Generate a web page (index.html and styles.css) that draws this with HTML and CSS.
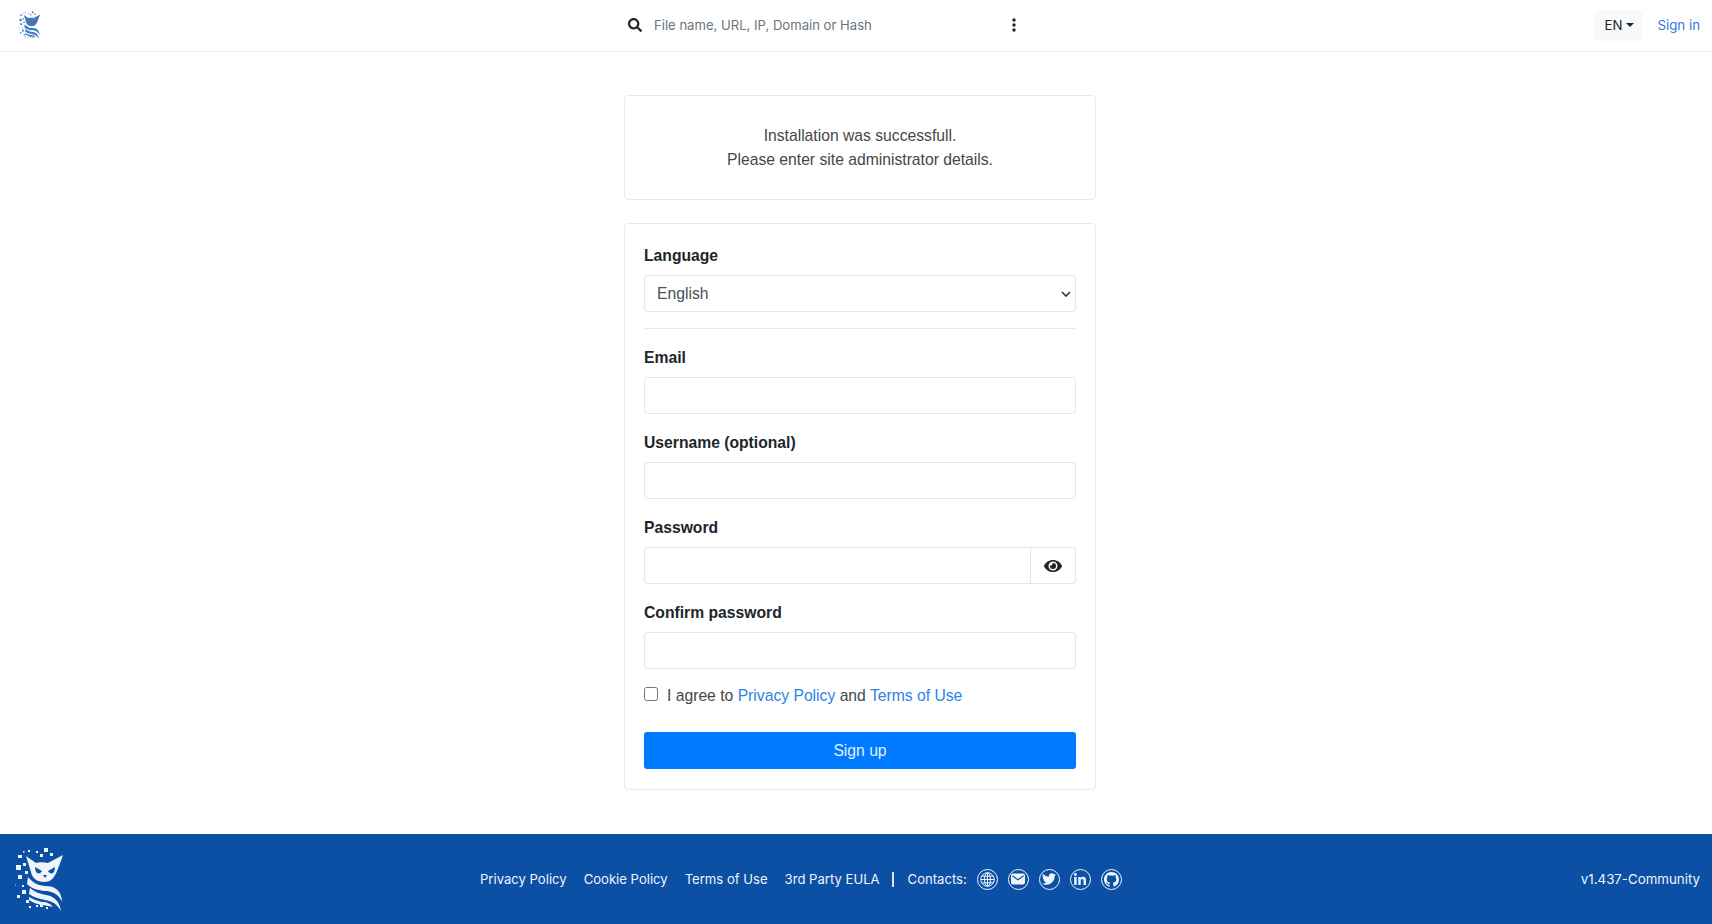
FILE: index.html
```html
<!DOCTYPE html>
<html lang="en">
<head>
    <meta charset="UTF-8">
    <meta name="viewport" content="width=device-width, initial-scale=1.0">
    <title>Sign up</title>
    <link rel="stylesheet" href="styles.css">
</head>
<body>
    <svg class="defs" width="0" height="0" aria-hidden="true">
        <symbol id="owl" viewBox="0 0 50 64">
            <g fill="currentColor">
                <rect x="29" y="1" width="4" height="4"/><rect x="21" y="4" width="2" height="2"/><rect x="13" y="3" width="2" height="2"/><rect x="8" y="4" width="1.5" height="1.5"/>
                <rect x="25" y="7" width="3" height="3"/><rect x="35" y="6" width="3" height="3"/><rect x="3" y="8" width="4" height="3"/><rect x="12" y="11" width="2" height="2"/>
                <rect x="1" y="18" width="5" height="5"/><rect x="8" y="16" width="3" height="3"/><rect x="3" y="28" width="4" height="4"/><rect x="10" y="24" width="3" height="3"/>
                <rect x="-1" y="37" width="1.5" height="1.5"/><rect x="7" y="38" width="2" height="2"/><rect x="7" y="43" width="4" height="4"/><rect x="2" y="48" width="3" height="3"/>
                <rect x="11" y="53" width="3" height="3"/><rect x="14" y="59" width="2" height="2"/><rect x="21" y="58" width="2" height="2"/><rect x="25" y="57" width="3" height="3"/><rect x="31" y="60" width="2" height="2"/>
                <path d="M11 9l10 7c3-1 8-1 12 0l15-8c-2 6-4 11-6 16-3 8-7 11-13 11-7 0-12-4-13-10z"/>
                <path d="M13 30c4 5 10 9 18 9 7 0 13 3 15 10 1 3 1 6 1 6-3-7-8-10-15-11-7 0-15-2-20-7z"/>
                <path d="M15 41c5 4 10 6 16 7 7 1 12 5 14 12l1 4c-4-7-9-10-16-11-6-1-12-3-16-6z"/>
                <path d="M14 50c4 2 8 4 13 5 5 0 9 2 11 5-4-1-8-2-12-2-4-1-9-3-12-5z"/>
            </g>
            <path class="owl-eyes" d="M20 20l7 4c-1 2-3 3-5 2-1-1-2-3-2-6zm20 0l-7 4c1 2 3 3 5 2 1-1 2-3 2-6zM28 28l2 3 2-3z"/>
        </symbol>
    </svg>

    <header class="topbar">
        <a class="brand" href="#"><svg class="brand-logo"><use href="#owl"/></svg></a>
        <form class="search">
            <svg class="search-icon" viewBox="0 0 512 512"><path d="M505 442.7L405.3 343c-4.5-4.5-10.6-7-17-7H372c27.6-35.3 44-79.7 44-128C416 93.1 322.9 0 208 0S0 93.1 0 208s93.1 208 208 208c48.3 0 92.7-16.4 128-44v16.3c0 6.4 2.5 12.5 7 17l99.7 99.7c9.4 9.4 24.6 9.4 33.9 0l28.3-28.3c9.4-9.4 9.4-24.6.1-34zM208 336c-70.7 0-128-57.2-128-128 0-70.7 57.2-128 128-128 70.7 0 128 57.2 128 128 0 70.7-57.2 128-128 128z"/></svg>
            <input class="search-input" type="text" placeholder="File name, URL, IP, Domain or Hash">
            <svg class="search-more" viewBox="0 0 4 14"><circle cx="2" cy="2" r="1.7"/><circle cx="2" cy="7" r="1.7"/><circle cx="2" cy="12" r="1.7"/></svg>
        </form>
        <div class="topbar-right">
            <button class="lang-btn" type="button">EN<span class="caret"></span></button>
            <a class="signin" href="#">Sign in</a>
        </div>
    </header>

    <main>
        <div class="card notice">
            <p>Installation was successfull.</p>
            <p>Please enter site administrator details.</p>
        </div>
        <form class="card signup">
            <div class="field first">
                <label for="language">Language</label>
                <div class="select-wrap">
                    <select id="language" class="control"><option>English</option></select>
                    <svg class="select-arrow" viewBox="0 0 10 6"><path d="M1 1l4 4 4-4"/></svg>
                </div>
            </div>
            <hr>
            <div class="field">
                <label for="email">Email</label>
                <input id="email" class="control" type="email">
            </div>
            <div class="field">
                <label for="username">Username (optional)</label>
                <input id="username" class="control" type="text">
            </div>
            <div class="field">
                <label for="password">Password</label>
                <div class="input-group">
                    <input id="password" class="control" type="password">
                    <button class="eye-btn" type="button">
                        <svg viewBox="0 0 576 512"><path d="M572.52 241.4C518.29 135.59 410.93 64 288 64S57.68 135.64 3.48 241.41a32.35 32.35 0 0 0 0 29.19C57.71 376.41 165.07 448 288 448s230.32-71.64 284.52-177.41a32.35 32.35 0 0 0 0-29.19zM288 400a144 144 0 1 1 144-144 143.93 143.93 0 0 1-144 144zm0-240a95.31 95.31 0 0 0-25.31 3.79 47.85 47.85 0 0 1-66.9 66.9A95.78 95.78 0 1 0 288 160z"/></svg>
                    </button>
                </div>
            </div>
            <div class="field">
                <label for="confirm">Confirm password</label>
                <input id="confirm" class="control" type="password">
            </div>
            <div class="agree">
                <input id="agree" type="checkbox">
                <label for="agree">I agree to <a href="#">Privacy Policy</a> and <a href="#">Terms of Use</a></label>
            </div>
            <button class="submit" type="submit">Sign up</button>
        </form>
    </main>

    <footer class="footer">
        <a class="footer-brand" href="#"><svg class="footer-logo"><use href="#owl"/></svg></a>
        <nav class="footer-links">
            <a href="#">Privacy Policy</a>
            <a href="#">Cookie Policy</a>
            <a href="#">Terms of Use</a>
            <a href="#">3rd Party EULA</a>
            <span class="divider"></span>
            <span class="contacts">Contacts:</span>
            <a class="social" href="#">
                <svg class="ic-globe" viewBox="0 0 12 12"><g class="line"><circle cx="6" cy="6" r="5.4"/><ellipse cx="6" cy="6" rx="2.4" ry="5.4"/><path d="M.6 6h10.8M1.4 3.3h9.2M1.4 8.7h9.2M6 .6v10.8"/></g></svg>
            </a>
            <a class="social" href="#">
                <svg class="ic-mail" viewBox="0 0 14 12"><rect class="solid" x="0" y="0.5" width="14" height="11" rx="2"/><path class="cut" d="M1.4 2.8l5.6 4 5.6-4"/></svg>
            </a>
            <a class="social" href="#">
                <svg class="ic-bird" viewBox="0 0 512 512"><path class="solid" d="M459.37 151.716c.325 4.548.325 9.097.325 13.645 0 138.72-105.583 298.558-298.558 298.558-59.452 0-114.68-17.219-161.137-47.106 8.447.974 16.568 1.299 25.34 1.299 49.055 0 94.213-16.568 130.274-44.832-46.132-.975-84.792-31.188-98.112-72.772 6.498.974 12.995 1.624 19.818 1.624 9.421 0 18.843-1.3 27.614-3.573-48.081-9.747-84.143-51.98-84.143-102.985v-1.299c13.969 7.797 30.214 12.67 47.431 13.319-28.264-18.843-46.781-51.005-46.781-87.391 0-19.492 5.197-37.36 14.294-52.954 51.655 63.675 129.3 105.258 216.365 109.807-1.624-7.797-2.599-15.918-2.599-24.04 0-57.828 46.782-104.934 104.934-104.934 30.213 0 57.502 12.67 76.67 33.137 23.715-4.548 46.456-13.32 66.599-25.34-7.798 24.366-24.366 44.833-46.132 57.827 21.117-2.273 41.584-8.122 60.426-16.243-14.292 20.791-32.161 39.308-52.628 54.253z"/></svg>
            </a>
            <a class="social" href="#">
                <svg class="ic-in" viewBox="0 0 448 448"><path class="solid" d="M100.28 448H7.4V148.9h92.88zM53.79 108.1C24.09 108.1 0 83.5 0 53.8a53.79 53.79 0 0 1 107.58 0c0 29.7-24.1 54.3-53.79 54.3zM447.9 448h-92.68V302.4c0-34.7-.7-79.2-48.29-79.2-48.29 0-55.69 37.7-55.69 76.7V448h-92.78V148.9h89.08v40.8h1.3c12.4-23.5 42.69-48.3 87.88-48.3 94 0 111.28 61.9 111.28 142.3V448z"/></svg>
            </a>
            <a class="social" href="#">
                <svg class="ic-gh" viewBox="0 0 16 16"><path class="solid" d="M8 0C3.58 0 0 3.58 0 8c0 3.54 2.29 6.53 5.47 7.59.4.07.55-.17.55-.38 0-.19-.01-.82-.01-1.49-2.01.37-2.53-.49-2.69-.94-.09-.23-.48-.94-.82-1.13-.28-.15-.68-.52-.01-.53.63-.01 1.08.58 1.23.82.72 1.21 1.87.87 2.33.66.07-.52.28-.87.51-1.07-1.78-.2-3.64-.89-3.64-3.95 0-.87.31-1.59.82-2.15-.08-.2-.36-1.02.08-2.12 0 0 .67-.21 2.2.82.64-.18 1.32-.27 2-.27.68 0 1.36.09 2 .27 1.53-1.04 2.2-.82 2.2-.82.44 1.1.16 1.92.08 2.12.51.56.82 1.27.82 2.15 0 3.07-1.87 3.75-3.65 3.95.29.25.54.73.54 1.48 0 1.07-.01 1.93-.01 2.2 0 .21.15.46.55.38A8.013 8.013 0 0016 8c0-4.42-3.58-8-8-8z"/></svg>
            </a>
        </nav>
        <span class="version">v1.437-Community</span>
    </footer>
</body>
</html>
```

FILE: styles.css
```css
* {
    margin: 0;
    padding: 0;
    box-sizing: border-box;
}

html {
    overflow: hidden;
}

body {
    height: 924px;
    display: flex;
    flex-direction: column;
    background: #fff;
    color: #212529;
    font-family: "Liberation Sans", Arial, sans-serif;
    font-size: 15.7px;
    line-height: 24px;
}

a {
    text-decoration: none;
}

.defs {
    position: absolute;
}

/* top bar */
.topbar {
    display: flex;
    align-items: center;
    height: 52px;
    padding: 0 12px 1px 18px;
    border-bottom: 1px solid #f1f1f1;
    font-family: Inter, "Noto Sans", sans-serif;
    font-size: 13.3px;
}

.brand {
    display: flex;
    width: 24px;
    color: #3a7cc2;
    --owl-eyes: #b5475a;
}

.brand-logo {
    width: 24px;
    height: 28px;
}

.search {
    display: flex;
    align-items: center;
    width: 393px;
    margin-left: 586px;
}

.search-icon {
    width: 14px;
    height: 14px;
    fill: #212529;
}

.search-input {
    flex: 1;
    margin-left: 12px;
    border: none;
    outline: none;
    background: transparent;
    font-family: inherit;
    font-size: 13.1px;
}

.search-input::placeholder {
    color: #6c757d;
    opacity: 1;
}

.search-more {
    width: 4px;
    height: 14px;
    margin-right: 5px;
    fill: #212529;
}

.topbar-right {
    display: flex;
    align-items: center;
    margin-left: auto;
}

.lang-btn {
    display: flex;
    align-items: center;
    height: 31px;
    padding: 0 9px;
    border: none;
    border-radius: 4px;
    background: #f8f9fa;
    color: #212529;
    font-family: inherit;
    font-size: 13.3px;
}

.caret {
    margin-left: 4px;
    border-top: 4px solid #212529;
    border-left: 4px solid transparent;
    border-right: 4px solid transparent;
}

.signin {
    margin-left: 14px;
    color: #2d7be0;
}

/* cards */
main {
    flex: 1;
    display: flex;
    flex-direction: column;
    align-items: center;
    padding: 43px 0 0 8px;
}

.card {
    width: 472px;
    border: 1px solid #e6e8ea;
    border-radius: 4px;
    background: #fff;
}

.notice {
    height: 105px;
    padding-top: 28px;
    text-align: center;
    color: #43474b;
    line-height: 23.5px;
}

.signup {
    height: 567px;
    margin-top: 23px;
    padding: 20px 19px;
}

.field {
    margin-top: 17px;
}

.field.first {
    margin-top: 0;
}

.field label {
    display: block;
    margin-bottom: 7px;
    font-weight: 700;
}

.control {
    display: block;
    width: 100%;
    height: 37px;
    padding: 6px 12px;
    border: 1px solid #e3e5e8;
    border-radius: 4px;
    outline: none;
    background: #fff;
    color: #495057;
    font-family: inherit;
    font-size: 15.7px;
}

.select-wrap {
    position: relative;
}

select.control {
    appearance: none;
}

.select-arrow {
    position: absolute;
    top: 16px;
    right: 5px;
    width: 10px;
    height: 6px;
    fill: none;
    stroke: #343a40;
    stroke-width: 1.7;
}

hr {
    margin-top: 16px;
    border: none;
    border-top: 1px solid #e8eaec;
}

.input-group {
    display: flex;
}

.input-group .control {
    flex: 1;
    border-radius: 4px 0 0 4px;
}

.eye-btn {
    display: flex;
    align-items: center;
    justify-content: center;
    width: 45px;
    border: 1px solid #e3e5e8;
    border-left: none;
    border-radius: 0 4px 4px 0;
    background: #fff;
}

.eye-btn svg {
    width: 18px;
    height: 16px;
    fill: #212529;
}

.agree {
    display: flex;
    margin-top: 15px;
    color: #43474b;
}

.agree input {
    width: 14px;
    height: 14px;
    margin: 3px 9px 0 0;
}

.agree a {
    color: #2d83e6;
}

.submit {
    display: block;
    width: 100%;
    height: 37px;
    margin-top: 24px;
    border: none;
    border-radius: 3px;
    background: #007bff;
    color: #e4f0ff;
    font-family: inherit;
    font-size: 15.7px;
}

/* footer */
.footer {
    display: flex;
    align-items: center;
    height: 90px;
    padding: 0 12px 0 15px;
    background: #0b50a5;
    color: #f0f5fb;
    font-family: Inter, "Noto Sans", sans-serif;
    font-size: 13.1px;
}

.footer a {
    color: #f0f5fb;
}

.footer-brand {
    display: flex;
    color: #fff;
    --owl-eyes: #0b50a5;
}

.footer-logo {
    width: 50px;
    height: 64px;
}

.owl-eyes {
    fill: var(--owl-eyes);
}

.footer-links {
    display: flex;
    align-items: center;
    margin-left: 415px;
}

.footer-links > a + a {
    margin-left: 17px;
}

.divider {
    width: 2px;
    height: 15px;
    margin: 0 14px 0 12px;
    background: #dbe6f3;
}

.footer-links .social {
    display: flex;
    align-items: center;
    justify-content: center;
    width: 21px;
    height: 21px;
    margin-left: 10px;
    border: 1.5px solid #f0f5fb;
    border-radius: 50%;
}

.ic-globe {
    width: 15px;
    height: 15px;
}

.ic-mail {
    width: 14px;
    height: 12px;
}

.ic-bird {
    width: 14px;
    height: 14px;
}

.ic-in {
    width: 12px;
    height: 12px;
}

.ic-gh {
    width: 15px;
    height: 15px;
}

.social .line {
    fill: none;
    stroke: #f0f5fb;
    stroke-width: 0.8;
}

.social .solid {
    fill: #f0f5fb;
}

.social .cut {
    fill: none;
    stroke: #0b50a5;
    stroke-width: 1.2;
}

.version {
    margin-left: auto;
    font-size: 13.3px;
}
```
